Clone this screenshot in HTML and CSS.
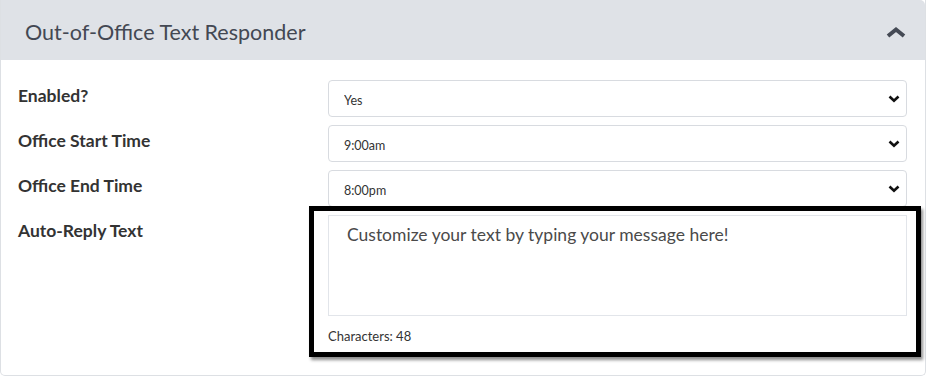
FILE: index.html
```html
<!DOCTYPE html>
<html lang="en">
<head>
    <meta charset="UTF-8">
    <meta name="viewport" content="width=device-width, initial-scale=1.0">
    <title>Out-of-Office Text Responder</title>
    <link rel="stylesheet" href="styles.css">
</head>
<body>

    <div class="panel">
        <div class="panel-header">
            <h2>Out-of-Office Text Responder</h2>
            <svg class="collapse-icon" width="22" height="12" viewBox="0 0 22 12">
                <path d="M3 10 L11 3.5 L19 10" fill="none" stroke="#454a55" stroke-width="4" stroke-linejoin="miter"/>
            </svg>
        </div>

        <div class="panel-body">
            <label class="field-label">Enabled?</label>
            <div class="select-wrap">
                <select>
                    <option>Yes</option>
                    <option>No</option>
                </select>
                <svg class="select-arrow" width="12" height="8" viewBox="0 0 12 8"><path d="M1.5 1.5 L6 5.8 L10.5 1.5" fill="none" stroke="#111" stroke-width="2.6"/></svg>
            </div>

            <label class="field-label">Office Start Time</label>
            <div class="select-wrap">
                <select>
                    <option>9:00am</option>
                </select>
                <svg class="select-arrow" width="12" height="8" viewBox="0 0 12 8"><path d="M1.5 1.5 L6 5.8 L10.5 1.5" fill="none" stroke="#111" stroke-width="2.6"/></svg>
            </div>

            <label class="field-label">Office End Time</label>
            <div class="select-wrap">
                <select>
                    <option>8:00pm</option>
                </select>
                <svg class="select-arrow" width="12" height="8" viewBox="0 0 12 8"><path d="M1.5 1.5 L6 5.8 L10.5 1.5" fill="none" stroke="#111" stroke-width="2.6"/></svg>
            </div>

            <label class="field-label">Auto-Reply Text</label>
            <div class="reply-field">
                <textarea>Customize your text by typing your message here!</textarea>
                <div class="char-count">Characters: 48</div>
                <div class="highlight-box"></div>
            </div>
        </div>
    </div>

</body>
</html>
```

FILE: styles.css
```css
body {
    font-family: Lato, "Open Sans", Arial, sans-serif;
    background-color: #ffffff;
    margin: 0;
    padding: 0;
}
.panel {
    width: 924px;
    border: 1px solid #dde0e4;
    border-top: none;
    border-radius: 0 0 5px 5px;
    background: white;
}
.panel-header {
    height: 60px;
    background: #dfe2e7;
    display: flex;
    align-items: center;
    justify-content: space-between;
    padding: 0 18px 0 24px;
    border-radius: 0 5px 0 0;
}
.panel-header h2 {
    margin: 3px 0 0 0;
    font-size: 21.5px;
    font-weight: normal;
    color: #434853;
}
.collapse-icon {
    margin-top: 4px;
}
.panel-body {
    display: grid;
    grid-template-columns: 310px 1fr;
    row-gap: 8px;
    padding: 20px 18px 31px 17px;
}
.field-label {
    font-size: 17.5px;
    font-weight: bold;
    color: #333;
    padding-top: 5px;
}
.select-wrap {
    position: relative;
}
.select-wrap select {
    appearance: none;
    -webkit-appearance: none;
    width: 100%;
    height: 37px;
    border: 1px solid #d8dbe0;
    border-radius: 4px;
    background: white;
    font-family: Lato, Arial, sans-serif;
    font-size: 12.5px;
    color: #333;
    padding: 4px 30px 0 15px;
}
.select-arrow {
    position: absolute;
    right: 7px;
    top: 15px;
    pointer-events: none;
}
.reply-field {
    position: relative;
}
.reply-field textarea {
    display: block;
    width: 100%;
    height: 101px;
    box-sizing: border-box;
    border: 1px solid #e2e5ea;
    resize: none;
    font-family: Lato, Arial, sans-serif;
    font-size: 17.5px;
    color: #4a4a4a;
    padding: 8px 18px 7px;
}
.char-count {
    margin-top: 12px;
    font-size: 13px;
    color: #333;
}
.highlight-box {
    position: absolute;
    left: -19px;
    top: -9px;
    width: 602px;
    height: 141px;
    border: 5px solid #000;
    box-shadow: 2px 3px 3px rgba(0, 0, 0, 0.45);
    pointer-events: none;
}
```
